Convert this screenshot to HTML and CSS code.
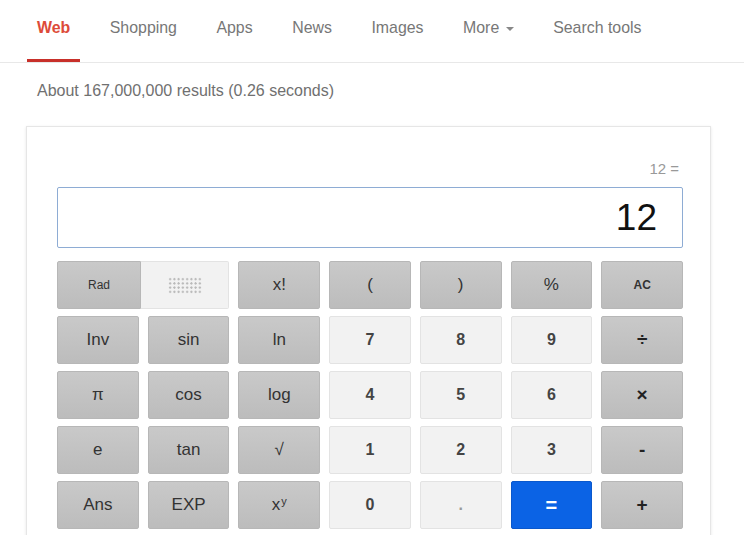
FILE: index.html
```html
<!DOCTYPE html>
<html lang="en">
<head>
    <meta charset="UTF-8">
    <meta name="viewport" content="width=device-width, initial-scale=1.0">
    <title>12 - Search</title>
    <link rel="stylesheet" href="styles.css">
</head>
<body>
    <div class="tabs">
        <a class="tab active">Web</a>
        <a class="tab">Shopping</a>
        <a class="tab">Apps</a>
        <a class="tab">News</a>
        <a class="tab">Images</a>
        <a class="tab">More <span class="caret"></span></a>
        <a class="tab">Search tools</a>
    </div>

    <div class="stats">About 167,000,000 results (0.26 seconds)</div>

    <div class="calc">
        <div class="history">12 =</div>
        <div class="display">12</div>

        <div class="keys">
            <div class="key-toggle">
                <div class="key dark small half">Rad</div>
                <div class="key light half"><span class="dots"></span></div>
            </div>
            <div class="key dark">x!</div>
            <div class="key dark">(</div>
            <div class="key dark">)</div>
            <div class="key dark">%</div>
            <div class="key dark small bold">AC</div>

            <div class="key dark">Inv</div>
            <div class="key dark">sin</div>
            <div class="key dark">ln</div>
            <div class="key light num">7</div>
            <div class="key light num">8</div>
            <div class="key light num">9</div>
            <div class="key dark op">÷</div>

            <div class="key dark">π</div>
            <div class="key dark">cos</div>
            <div class="key dark">log</div>
            <div class="key light num">4</div>
            <div class="key light num">5</div>
            <div class="key light num">6</div>
            <div class="key dark op">×</div>

            <div class="key dark">e</div>
            <div class="key dark">tan</div>
            <div class="key dark">√</div>
            <div class="key light num">1</div>
            <div class="key light num">2</div>
            <div class="key light num">3</div>
            <div class="key dark op">-</div>

            <div class="key dark">Ans</div>
            <div class="key dark">EXP</div>
            <div class="key dark">x<sup>y</sup></div>
            <div class="key light num">0</div>
            <div class="key light num dot">.</div>
            <div class="key equals">=</div>
            <div class="key dark op">+</div>
        </div>
    </div>
</body>
</html>
```

FILE: styles.css
```css
body {
    margin: 0;
    font-family: 'Liberation Sans', Arial, sans-serif;
    background: #fff;
    overflow: hidden;
}

.tabs {
    display: flex;
    height: 63px;
    padding-left: 27px;
    border-bottom: 1px solid #e8e8e8;
    box-sizing: border-box;
}

.tab {
    padding: 18px 10px 0;
    margin-right: 19.5px;
    font-size: 15.9px;
    line-height: 20px;
    color: #777;
    box-sizing: border-box;
    cursor: pointer;
}

.tab.active {
    color: #dd4b39;
    font-weight: bold;
    border-bottom: 3px solid #c8302a;
    height: 62px;
}

.caret {
    display: inline-block;
    vertical-align: middle;
    margin-left: 2px;
    border-left: 4px solid transparent;
    border-right: 4px solid transparent;
    border-top: 4px solid #888;
}

.stats {
    padding: 18px 0 0 37px;
    font-size: 16px;
    line-height: 19px;
    color: #707070;
}

.calc {
    margin: 26px 0 0 26px;
    width: 626px;
    padding: 33px 27px 30px 30px;
    border: 1px solid #e6e6e6;
    box-shadow: 0 1px 3px rgba(0, 0, 0, 0.1);
}

.history {
    text-align: right;
    padding-right: 4px;
    font-size: 15px;
    line-height: 17px;
    color: #999;
}

.display {
    margin-top: 10px;
    height: 59px;
    border: 1px solid #8eacd4;
    border-radius: 2px;
    padding-right: 25px;
    text-align: right;
    font-size: 37px;
    line-height: 60px;
    color: #111;
}

.keys {
    display: grid;
    grid-template-columns: repeat(7, 1fr);
    grid-auto-rows: 48px;
    column-gap: 9px;
    row-gap: 7px;
    margin-top: 13px;
}

.key {
    display: flex;
    align-items: center;
    justify-content: center;
    border-radius: 2px;
    font-size: 17px;
    color: #333;
    box-sizing: border-box;
    cursor: pointer;
}

.key.dark {
    background: linear-gradient(#c9c9c9, #bcbcbc);
    border: 1px solid #b7b7b7;
}

.key.light {
    background: #f2f2f2;
    border: 1px solid #e3e3e3;
}

.key.num,
.key.op {
    font-weight: bold;
    font-size: 16px;
    color: #444;
}

.key.op {
    font-size: 19px;
    color: #222;
}

.key.dot {
    color: #999;
}

.key.small {
    font-size: 12px;
}

.key.bold {
    font-weight: bold;
}

.key.equals {
    background: #0b63e5;
    border: 1px solid #0a58cc;
    color: #fff;
    font-size: 20px;
    font-weight: bold;
}

.key sup {
    font-size: 11px;
    margin-left: 1px;
    position: relative;
    top: -4px;
}

.key-toggle {
    grid-column: span 2;
    display: flex;
}

.key-toggle .half:first-child {
    width: 84px;
    border-radius: 2px 0 0 2px;
}

.key-toggle .half:last-child {
    flex: 1;
    border-radius: 0 2px 2px 0;
    border-left: none;
}

.dots {
    width: 34px;
    height: 17px;
    background-image: radial-gradient(circle, #b8b8b8 0.9px, transparent 1.3px);
    background-size: 4.25px 4.25px;
}
```
